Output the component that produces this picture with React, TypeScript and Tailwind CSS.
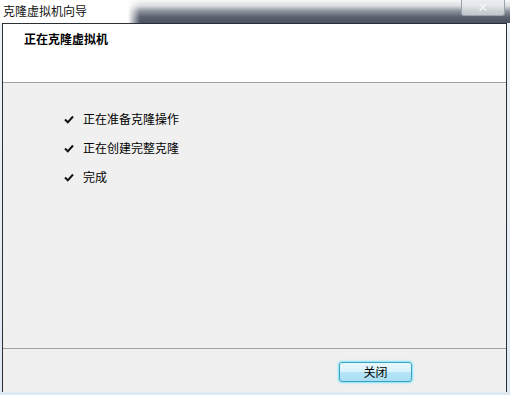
const steps = ["正在准备克隆操作", "正在创建完整克隆", "完成"];

function CheckMark() {
  return (
    <svg width="10" height="9" viewBox="0 0 10 9" className="shrink-0">
      <path d="M1 4.5 L3.8 7.3 L9 1.5" fill="none" stroke="#111" strokeWidth="2" />
    </svg>
  );
}

export default function App() {
  return (
    <div className="w-[510px] h-[395px] bg-[#f4f7fa] flex flex-col overflow-hidden font-['Noto_Sans_CJK_SC',sans-serif] text-[12px] text-black">
      {/* title bar */}
      <div className="h-[23px] flex shrink-0 bg-white">
        <div className="w-[128px] pl-[3px] pt-[2px] leading-[17px] text-[12px] text-[#111]">克隆虚拟机向导</div>
        <div className="flex-1 flex justify-end pr-[5px] bg-[linear-gradient(to_bottom,#f6f7f8_0px,#d9dce0_6px,#8d949d_11px,#5a6270_17px,#4a5260_23px)] [mask-image:linear-gradient(to_right,transparent,black_12px)]">
          <div className="w-[44px] h-[16px] border border-t-0 border-[#9aa3ad] rounded-b-[3px] bg-[#e6e9ed]/70 flex items-center justify-center">
            <span className="text-[#f4f6f8] text-[13px] leading-none font-['DejaVu_Sans',sans-serif]">✕</span>
          </div>
        </div>
      </div>

      {/* window body */}
      <div className="flex-1 flex pl-[2px] pr-[3px] pb-[3px] bg-[linear-gradient(to_bottom,#eef2f6,#dfe9f2)]">
        <div className="flex-1 flex flex-col border border-[#2b2f36] border-b-0">
          <div className="h-[58px] shrink-0 bg-white pl-[21px] pt-[7px]">
            <div className="font-bold text-[12px] leading-[16px]">正在克隆虚拟机</div>
          </div>
          <div className="h-[2px] shrink-0 border-t border-[#a0a0a0] bg-[#f0f0f0]" />
          <div className="flex-1 bg-[#f0f0f0] flex flex-col pl-[61px] pt-[26px] gap-[11px]">
            {steps.map((s) => (
              <div key={s} className="flex items-center gap-[9px] h-[18px]">
                <CheckMark />
                <span className="leading-[18px] text-[12px]">{s}</span>
              </div>
            ))}
          </div>
          <div className="h-[2px] shrink-0 border-t border-[#a0a0a0] bg-[#f0f0f0]" />
          <div className="h-[42px] shrink-0 bg-[#f0f0f0] flex justify-end items-start pt-[12px] pr-[94px]">
            <button className="w-[73px] h-[20px] rounded-[3px] border border-[#3c9fc4] shadow-[0_0_2px_1px_#7fe4f7] bg-[linear-gradient(to_bottom,#eaf8fd_0%,#d6f1fb_50%,#b7e5f7_51%,#a8def4_100%)] text-[12px] leading-[18px] text-black">
              关闭
            </button>
          </div>
        </div>
      </div>
    </div>
  );
}
